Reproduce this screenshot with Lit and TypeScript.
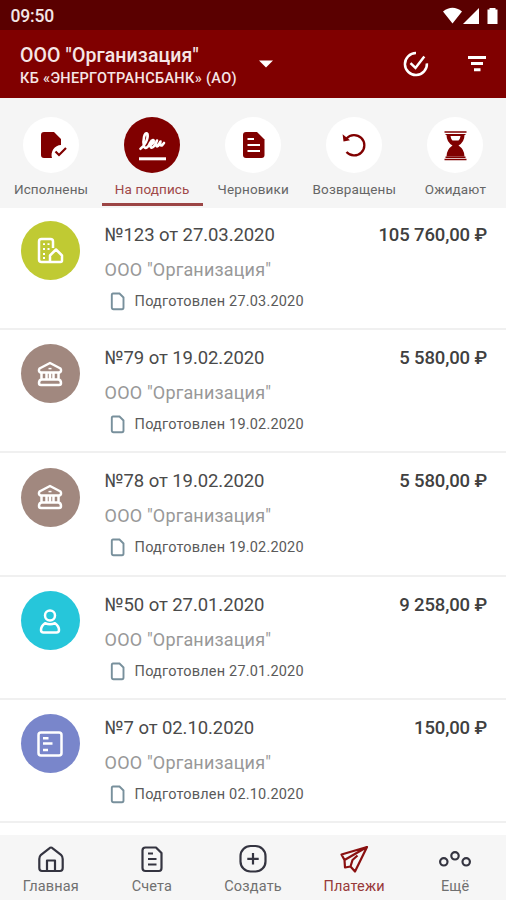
import { LitElement, html, css, svg } from "lit";
import { customElement, property } from "lit/decorators.js";

const avatarIcons: Record<string, unknown> = {
  building: svg`<path d="M11 25H5.500Q3 25 3 22.500V4.500Q3 2 5.500 2H14.500Q17 2 17 4.500V11M14 25V18.500L20 12.500L26 18.500V23.500Q26 25 24.500 25H10"/><path d="M7 7.200h2M11.500 7.200h2M7 12h2M11.500 12h2M7 17h2M7 21h2" stroke-width="1.800"/>`,
  bank: svg`<path d="M14 3L24.500 8.500Q26 11.500 23.500 12.500H4.500Q2 11.500 3.500 8.500ZM5.500 12.500V19M10.500 13V19M14 13V19M17.500 13V19M22.500 12.500V19M5.500 19.500H22.500Q25 20 25 23Q25 25 23 25H5Q3 25 3 23Q3 20 5.500 19.500Z"/><path d="M12.500 8.600h3" stroke-width="1.500"/>`,
  person: svg`<circle cx="14" cy="8.500" r="5"/><path d="M9 16.200Q14 18.500 19 16.200Q23 19 23 23Q23 25.500 20.500 25.500H7.500Q5 25.500 5 23Q5 19 9 16.200Z"/>`,
  form: svg`<rect x="2.500" y="2.500" width="23" height="23" rx="2.500"/><path d="M7 8.200h5.500M7 13.500h9.500M7 20h5"/>`,
};

const tabIcons: Record<string, unknown> = {
  done: svg`<path d="M7 1H17L24 8V14A10 10 0 0 0 15 27H7Q4 27 4 24V4Q4 1 7 1Z" fill="currentColor"/><path d="M18.500 20.500L22 24L29 17" fill="none" stroke="currentColor" stroke-width="2.200"/>`,
  sign: svg`<g fill="none" stroke="currentColor" stroke-linecap="round" stroke-linejoin="round"><path d="M2.500 17.800C6.500 15 10.500 8 9.500 3C6.500-.5 4.500 10 6 15.500C7.500 19 11 15 12 12C14 8 16.500 8.500 15.500 11C14.500 13.500 12 13.500 12.500 15.500C13.500 18.500 17 15.500 19 9.500C17.500 12.500 17.500 16.500 20 15L22.500 10.500Q21.500 15 24 14.500L26 12" stroke-width="2.600"/><path d="M1 27.800H28" stroke-width="3" stroke-linecap="butt"/></g>`,
  draft: svg`<path d="M7 1H18L25.500 8.500V24Q25.500 27 22.500 27H7Q4 27 4 24V4Q4 1 7 1Z" fill="currentColor"/><path d="M8.500 8H15M8.500 14H21M8.500 20H21" stroke="#fff" stroke-width="2.200"/>`,
  back: svg`<path d="M6.500 7.500A10.200 10.200 0 1 1 6.500 21" fill="none" stroke="currentColor" stroke-width="2.300"/><path d="M2.600 3.300L3.500 10.500L10 9.200Z" fill="currentColor"/>`,
  wait: svg`<path d="M3.500 1H25.500M3.500 28.500H25.500" stroke="currentColor" stroke-width="1.700"/><path d="M4.500 3H24.500V4H4.500ZM4.500 25.500H24.500V27H4.500Z" fill="currentColor"/><path d="M5.500 4H23.500Q23.500 11 17.500 14.500Q23.500 18.500 23.500 25.500H5.500Q5.500 18.500 11.500 14.500Q5.500 11 5.500 4Z" fill="currentColor"/><path d="M9.500 5H19.500Q19 8.500 17.500 9.500H11.500Q10 8.500 9.500 5Z" fill="#fff"/>`,
};

const navIcons: Record<string, unknown> = {
  home: svg`<path d="M14 2.500Q14.800 2.500 16 3.600L24 9.800Q25.700 11.500 25.700 14V23Q25.700 26 23 26H5Q2.300 26 2.300 23V14Q2.300 11.500 4 9.800L12 3.600Q13.200 2.500 14 2.500ZM10 26V15.500H18V26"/>`,
  bills: svg`<path d="M7.500 2.500H18L23.500 8V23Q23.500 26 21 26H7.500Q4.500 26 4.500 23V5.500Q4.500 2.500 7.500 2.500Z"/><path d="M10 8.500h5M10 14h8.500M10 19.500h8.500"/>`,
  create: svg`<rect x="1.500" y="1" width="25" height="25.500" rx="10"/><path d="M14 8v11.500M8.300 13.800h11.400"/>`,
  pay: svg`<path d="M27 2L1.500 9.500L4.500 15L5 22.500L10.500 21.500L15 26.500ZM4.500 15L27 2M10.500 21.500L12.500 15L17.500 10.500"/>`,
  more: svg`<circle cx="2.800" cy="16.800" r="3.700"/><circle cx="14" cy="10.800" r="3.700"/><circle cx="25.200" cy="16.800" r="3.700"/>`,
};

@customElement("payment-row")
class PaymentRow extends LitElement {
  @property() kind = "";
  @property() number = "";
  @property() date = "";
  @property() amount = "";

  static styles = css`
    :host { display: grid; grid-template-columns: 59px 1fr; column-gap: 25px; box-sizing: border-box; height: 123.350px; padding: 14.500px 19px 0 20.600px; border-bottom: 2px solid #f0f0f0; white-space: nowrap; }
    .avatar { display: flex; align-items: center; justify-content: center; width: 59px; height: 59px; border-radius: 50%; }
    .building { background: #c0ca33; } .bank { background: #a1887f; } .person { background: #26c6da; } .form { background: #7986cb; }
    .avatar svg { width: 28px; height: 28px; fill: none; stroke: #fff; stroke-width: 2.500; stroke-linejoin: round; }
    .top { display: flex; justify-content: space-between; height: 26px; padding-top: .500px; line-height: 26px; font-size: 18.500px; letter-spacing: -.08px; color: #4a4a4a; }
    .sum { font-weight: 500; color: #404040; letter-spacing: -.13px; }
    .org { margin-top: 9px; height: 25px; line-height: 25px; font-size: 18px; letter-spacing: .17px; color: #989898; }
    .state { display: flex; align-items: center; gap: 10px; margin-top: 9.600px; padding-left: 5px; height: 20px; font-size: 14.500px; letter-spacing: .19px; color: #5a5a5a; }
    .state svg { width: 15px; height: 19px; fill: none; stroke: #78909c; stroke-width: 1.900; }
  `;

  render() {
    return html`
      <div class="avatar ${this.kind}"><svg viewBox="0 0 28 28">${avatarIcons[this.kind]}</svg></div>
      <div>
        <div class="top"><span class="title">№${this.number} от ${this.date}</span><span class="sum">${this.amount} ₽</span></div>
        <div class="org">ООО "Организация"</div>
        <div class="state"><svg viewBox="0 0 15 19"><path d="M2.500 1.500H9.500L13.500 5.500V15.500Q13.500 17.200 12 17.200H3.500Q1.800 17.200 1.800 15.500V3Q1.800 1.500 3 1.500Z"/></svg><span>Подготовлен ${this.date}</span></div>
      </div>`;
  }
}

@customElement("app-root")
class AppRoot extends LitElement {
  static styles = css`
    :host { display: flex; flex-direction: column; width: 506px; height: 900px; overflow: hidden; background: #fff; font-family: Roboto, "Noto Sans", sans-serif; white-space: nowrap; }
    .status { display: flex; justify-content: space-between; align-items: center; box-sizing: border-box; height: 30px; flex: none; padding: 2px 7px 0 10.500px; background: #5a0000; color: #f2e6e6; font-size: 17.500px; font-weight: 500; letter-spacing: -.2px; }
    .status svg { width: 56px; height: 18px; fill: #fff; }
    .header { display: flex; align-items: center; box-sizing: border-box; height: 68px; flex: none; padding: 0 18px 0 20px; background: #800000; color: #f6e6e6; }
    .company { width: 239px; padding-top: 3px; }
    .name { font-size: 19.500px; line-height: 25px; font-weight: 500; letter-spacing: .1px; }
    .bank-name { font-size: 14.500px; line-height: 21px; font-weight: 500; letter-spacing: .33px; }
    .caret { width: 14px; height: 8px; fill: #fff; }
    .check { width: 28px; height: 28px; margin-left: 129px; fill: none; stroke: #fff; stroke-width: 2.500; }
    .filter { width: 20px; height: 20px; margin-left: 37px; stroke: #fff; stroke-width: 3; }
    .tabs { display: grid; grid-template-columns: repeat(5, 101.100px); height: 109.500px; box-sizing: border-box; padding-left: .500px; flex: none; background: #f5f5f5; }
    .tab { display: flex; flex-direction: column; align-items: center; box-sizing: border-box; padding-top: 19px; font-size: 13.500px; letter-spacing: .13px; color: #666; border-bottom: 3px solid transparent; height: 108px; }
    .disc { display: flex; align-items: center; justify-content: center; width: 56px; height: 56px; border-radius: 50%; background: #fff; color: #800000; }
    .disc svg { width: 29px; height: 29px; overflow: visible; }
    .tab span { margin-top: 6px; line-height: 20px; }
    .tab.active { color: #a04848; border-color: #9c4545; }
    .active .disc { background: #800000; color: #fff; }
    .list { flex: 1; min-height: 0; overflow: hidden; margin-top: -1px; }
    .nav { display: grid; grid-template-columns: repeat(5, 101.100px); box-sizing: border-box; height: 65px; flex: none; padding: 10px 0 0 .300px; background: #f6f6f6; }
    .item { display: flex; flex-direction: column; align-items: center; font-size: 14.500px; letter-spacing: .16px; color: #707070; }
    .item svg { width: 28px; height: 28px; overflow: visible; fill: none; stroke: #343440; stroke-width: 2.200; stroke-linejoin: round; }
    .item span { margin-top: 4px; line-height: 20px; }
    .item.active { color: #983a3a; } .item.active svg { stroke: #8a1010; }
  `;

  render() {
    const tabs = [["done", "Исполнены"], ["sign", "На подпись"], ["draft", "Черновики"], ["back", "Возвращены"], ["wait", "Ожидают"]];
    const rows = [
      ["building", "123", "27.03.2020", "105 760,00"],
      ["bank", "79", "19.02.2020", "5 580,00"],
      ["bank", "78", "19.02.2020", "5 580,00"],
      ["person", "50", "27.01.2020", "9 258,00"],
      ["form", "7", "02.10.2020", "150,00"],
    ];
    const nav = [["home", "Главная"], ["bills", "Счета"], ["create", "Создать"], ["pay", "Платежи"], ["more", "Ещё"]];
    return html`
      <div class="status"><span>09:50</span>
        <svg viewBox="0 0 56 18"><path d="M0 4.500Q9.500-3 19 4.500L9.500 16.500ZM20 17L36 1V17ZM46.500 2.500V1H52.500V2.500H54.500V17H44.500V2.500Z"/></svg>
      </div>
      <div class="header">
        <div class="company"><div class="name">ООО "Организация"</div><div class="bank-name">КБ «ЭНЕРГОТРАНСБАНК» (АО)</div></div>
        <svg class="caret" viewBox="0 0 14 8"><path d="M0 .5H14L7 7.500Z"/></svg>
        <svg class="check" viewBox="0 0 28 28"><path d="M14 3A11 11 0 1 0 24.900 13.300M8.500 13.200L13.500 18L22.300 6.500"/></svg>
        <svg class="filter" viewBox="0 0 20 20"><path d="M1 3.500H19M4 9.500H16M7 15.800H13.500"/></svg>
      </div>
      <div class="tabs">${tabs.map(([icon, label]) => html`<div class="tab ${icon === "sign" ? "active" : ""}"><div class="disc"><svg viewBox="0 0 29 29">${tabIcons[icon]}</svg></div><span>${label}</span></div>`)}</div>
      <div class="list">${rows.map(([kind, number, date, amount]) => html`<payment-row .kind=${kind} .number=${number} .date=${date} .amount=${amount}></payment-row>`)}</div>
      <div class="nav">${nav.map(([icon, label]) => html`<div class="item ${icon === "pay" ? "active" : ""}"><svg viewBox="0 0 28 28">${navIcons[icon]}</svg><span>${label}</span></div>`)}</div>`;
  }
}
